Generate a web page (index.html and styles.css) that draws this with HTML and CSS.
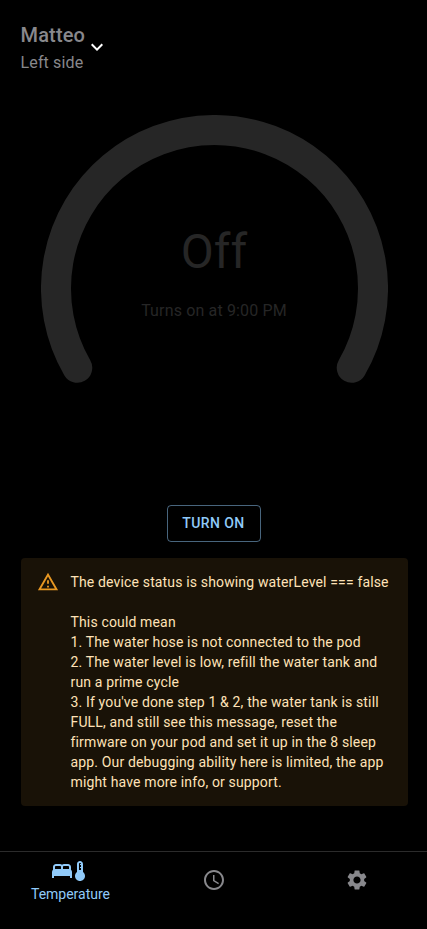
FILE: index.html
```html
<!DOCTYPE html>
<html lang="en">
<head>
<meta charset="utf-8">
<meta name="viewport" content="width=device-width, initial-scale=1">
<title>Temperature</title>
<link rel="stylesheet" href="styles.css">
</head>
<body>
<div class="app">
  <header class="side-picker">
    <div>
      <h1 class="name">Matteo</h1>
      <p class="side">Left side</p>
    </div>
    <svg class="icon chevron" viewBox="0 0 24 24"><path d="M16.59 8.59 12 13.17 7.41 8.59 6 10l6 6 6-6z"/></svg>
  </header>
  <main class="content">
    <section class="dial">
      <svg class="arc" viewBox="0 0 347 347"><path d="M36.24 252.75A158.5 158.5 0 1 1 310.76 252.75"/></svg>
      <div class="readout">
        <h2 class="state">Off</h2>
        <p class="schedule">Turns on at 9:00 PM</p>
      </div>
    </section>
    <button class="power" type="button">Turn on</button>
    <section class="alert" role="alert">
      <svg class="alert-icon" viewBox="0 0 24 24"><path d="M12 5.99L19.53 19H4.47L12 5.99M12 2L1 21h22L12 2zm1 14h-2v2h2v-2zm0-6h-2v4h2v-4z"/></svg>
      <div class="alert-text">The device status is showing waterLevel === false<br><br>This could mean<br>1. The water hose is not connected to the pod<br>2. The water level is low, refill the water tank and run a prime cycle<br>3. If you've done step 1 &amp; 2, the water tank is still FULL, and still see this message, reset the firmware on your pod and set it up in the 8 sleep app. Our debugging ability here is limited, the app might have more info, or support.</div>
    </section>
  </main>
  <nav class="tabs">
    <a class="tab selected">
      <span class="icon-pair">
        <svg class="icon" viewBox="0 0 24 24"><path d="M21 10.78V8c0-1.65-1.35-3-3-3h-4c-.77 0-1.47.3-2 .78-.53-.48-1.23-.78-2-.78H6C4.35 5 3 6.35 3 8v2.78c-.61.55-1 1.34-1 2.22v6h2v-2h16v2h2v-6c0-.88-.39-1.67-1-2.22zM14 7h4c.55 0 1 .45 1 1v2h-6V8c0-.55.45-1 1-1zM5 8c0-.55.45-1 1-1h4c.55 0 1 .45 1 1v2H5V8z"/></svg>
        <svg class="icon thermometer" viewBox="0 0 24 24"><path d="M15 13V5c0-1.66-1.34-3-3-3S9 3.34 9 5v8c-1.21.91-2 2.37-2 4 0 2.76 2.24 5 5 5s5-2.24 5-5c0-1.63-.79-3.09-2-4zm-4-8c0-.55.45-1 1-1s1 .45 1 1h-1v1h1v2h-1v1h1v2h-2V5z"/></svg>
      </span>
      <span class="tab-label">Temperature</span>
    </a>
    <a class="tab">
      <svg class="icon" viewBox="0 0 24 24"><path d="M11.99 2C6.47 2 2 6.48 2 12s4.47 10 9.99 10C17.52 22 22 17.52 22 12S17.52 2 11.99 2zM12 20c-4.42 0-8-3.58-8-8s3.58-8 8-8 8 3.58 8 8-3.58 8-8 8zm.5-13H11v6l5.25 3.15.75-1.23-4.5-2.67z"/></svg>
    </a>
    <a class="tab">
      <svg class="icon" viewBox="0 0 24 24"><path d="M19.14 12.94c.04-.3.06-.61.06-.94 0-.32-.02-.64-.07-.94l2.03-1.58c.18-.14.23-.41.12-.61l-1.92-3.32c-.12-.22-.37-.29-.59-.22l-2.39.96c-.5-.38-1.03-.7-1.62-.94l-.36-2.54c-.04-.24-.24-.41-.48-.41h-3.84c-.24 0-.43.17-.47.41l-.36 2.54c-.59.24-1.13.57-1.62.94l-2.39-.96c-.22-.08-.47 0-.59.22L2.74 8.87c-.12.21-.08.47.12.61l2.03 1.58c-.05.3-.09.63-.09.94s.02.64.07.94l-2.03 1.58c-.18.14-.23.41-.12.61l1.92 3.32c.12.22.37.29.59.22l2.39-.96c.5.38 1.03.7 1.62.94l.36 2.54c.05.24.24.41.48.41h3.84c.24 0 .44-.17.47-.41l.36-2.54c.59-.24 1.13-.56 1.62-.94l2.39.96c.22.08.47 0 .59-.22l1.92-3.32c.12-.22.07-.47-.12-.61l-2.01-1.58zM12 15.6c-1.98 0-3.6-1.62-3.6-3.6s1.62-3.6 3.6-3.6 3.6 1.62 3.6 3.6-1.62 3.6-3.6 3.6z"/></svg>
    </a>
  </nav>
</div>
</body>
</html>
```
FILE: styles.css
```css
* { box-sizing: border-box; }
body {
  margin: 0;
  background: #000;
  color: #88888c;
  font-family: Roboto, "Liberation Sans", sans-serif;
}
h1, h2, p { margin: 0; }
.app {
  height: 929px;
  display: flex;
  flex-direction: column;
  overflow: hidden;
}
.icon { display: block; width: 24px; height: 24px; fill: currentColor; }
.side-picker {
  display: flex;
  align-items: center;
  height: 93px;
  padding: 0 20.5px;
}
.name { font-size: 20px; font-weight: 500; line-height: 32px; letter-spacing: .0075em; }
.side { font-size: 16px; line-height: 24px; letter-spacing: .00938em; }
.chevron { color: #fff; }
.content {
  flex: 1;
  display: flex;
  flex-direction: column;
  align-items: center;
  padding: 22px 19px 0 21px;
}
.dial {
  display: grid;
  width: 347px;
  height: 390px;
}
.arc, .readout { grid-area: 1 / 1; }
.arc { width: 347px; height: 347px; }
.arc path { fill: none; stroke: #262626; stroke-width: 30; stroke-linecap: round; }
.readout { color: #262626; text-align: center; padding: 109px 1px 0 0; }
.state { font-size: 48px; font-weight: 400; line-height: 56px; }
.schedule { font-size: 16px; line-height: 24px; letter-spacing: .00938em; margin-top: 19px; }
.power {
  width: 94px;
  height: 37px;
  margin-right: 2px;
  padding: 0;
  border: 1px solid rgba(144, 202, 249, .5);
  border-radius: 4px;
  background: transparent;
  color: #90caf9;
  font: 500 14px/24.5px Roboto, sans-serif;
  letter-spacing: .02857em;
  text-transform: uppercase;
}
.alert {
  display: flex;
  align-self: stretch;
  height: 248px;
  margin-top: 16px;
  padding: 6px 16px;
  border-radius: 4px;
  background: #191207;
  color: #ffe2b7;
}
.alert-icon { flex: none; width: 22px; height: 22px; margin: 7px 11.5px 0 0; fill: #ffa726; opacity: .9; }
.alert-text { padding: 8px 0; font-size: 14px; line-height: 20.02px; letter-spacing: .01071em; }
.tabs {
  display: grid;
  grid-template-columns: 142px 143px 1fr;
  height: 78px;
  border-top: 1px solid #2b2b2b;
}
.tab {
  display: flex;
  flex-direction: column;
  align-items: center;
  justify-content: center;
  height: 56px;
}
.tab:last-child { padding-left: 2px; }
.selected { color: #90caf9; padding-top: 4px; }
.icon-pair { display: flex; }
.thermometer { margin-left: -6px; }
.tab-label { margin-right: 1px; font-size: 14px; line-height: 22px; }
```
